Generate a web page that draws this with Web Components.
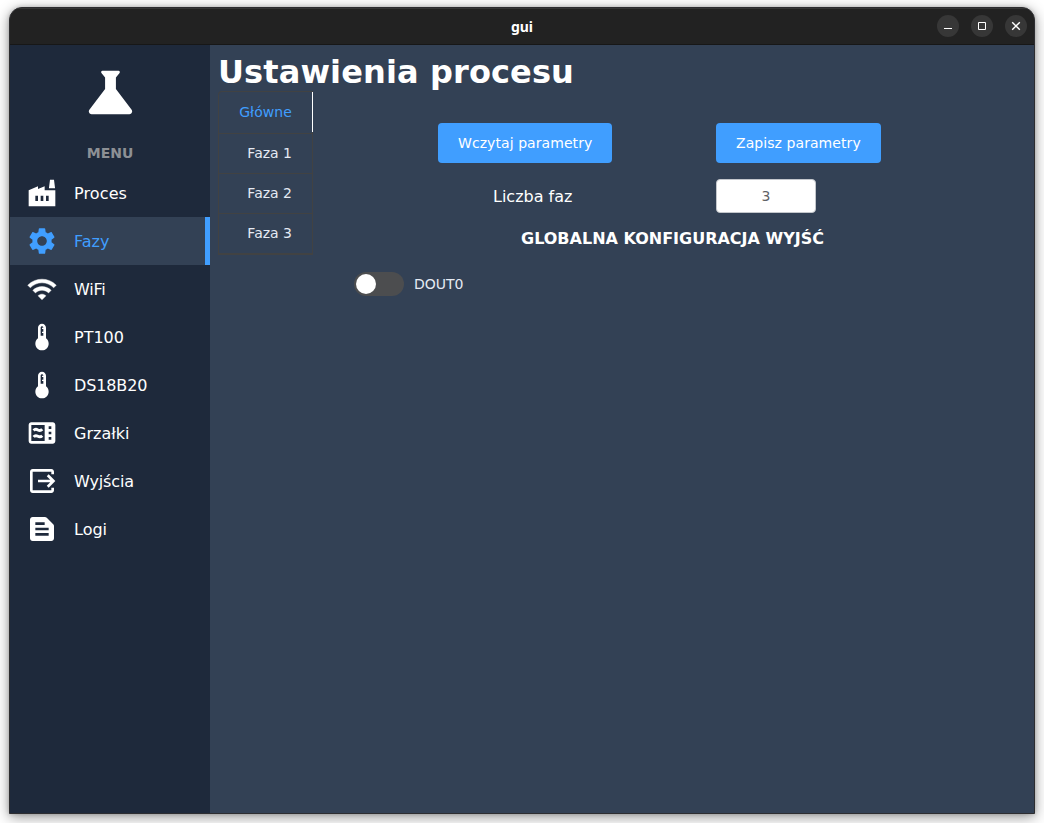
<!DOCTYPE html>
<html lang="pl">
<head>
<meta charset="utf-8">
<title>gui</title>
<style>
html,body{margin:0;height:100%;overflow:hidden;background:#fff}
body{font-family:"DejaVu Sans",sans-serif;color:#fff}
</style>
</head>
<body>
<app-window caption="gui">
  <side-menu slot="side">
    <menu-item icon="factory" style="letter-spacing:.12px">Proces</menu-item>
    <menu-item icon="settings" active>Fazy</menu-item>
    <menu-item icon="wifi" style="letter-spacing:-.2px">WiFi</menu-item>
    <menu-item icon="thermo">PT100</menu-item>
    <menu-item icon="thermo" style="letter-spacing:-.12px">DS18B20</menu-item>
    <menu-item icon="heater">Grzałki</menu-item>
    <menu-item icon="output" style="letter-spacing:-.12px">Wyjścia</menu-item>
    <menu-item icon="log">Logi</menu-item>
  </side-menu>
  <process-settings></process-settings>
</app-window>
<script>
const ICONS = {
  flask:'<path d="M19.8 18.4 14 10.67V6.5l1.35-1.69c.26-.33.03-.81-.39-.81H9.04c-.42 0-.65.48-.39.81L10 6.5v4.17L4.2 18.4c-.49.66-.02 1.6.8 1.6h14c.82 0 1.29-.94.8-1.6z"/>',
  factory:'<path fill-rule="evenodd" d="M22 10v12H2V10l7-3v2l5-2v3h8zM17.2 8.5 18 2h3l.8 6.5h-4.6zM11 18h2v-4h-2v4zM7 18h2v-4H7v4zM17 14h-2v4h2v-4z"/>',
  settings:'<path d="M19.14 12.94c.04-.3.06-.61.06-.94 0-.32-.02-.64-.07-.94l2.03-1.58c.18-.14.23-.41.12-.61l-1.92-3.32c-.12-.22-.37-.29-.59-.22l-2.39.96c-.5-.38-1.03-.7-1.62-.94l-.36-2.54c-.04-.24-.24-.41-.48-.41h-3.84c-.24 0-.43.17-.47.41l-.36 2.54c-.59.24-1.13.57-1.62.94l-2.39-.96c-.22-.08-.47 0-.59.22L2.74 8.87c-.12.21-.08.47.12.61l2.03 1.58c-.05.3-.09.63-.09.94s.02.64.07.94l-2.03 1.58c-.18.14-.23.41-.12.61l1.92 3.32c.12.22.37.29.59.22l2.39-.96c.5.38 1.03.7 1.62.94l.36 2.54c.05.24.24.41.48.41h3.84c.24 0 .44-.17.47-.41l.36-2.54c.59-.24 1.13-.56 1.62-.94l2.39.96c.22.08.47 0 .59-.22l1.92-3.32c.12-.22.07-.47-.12-.61l-2.01-1.58zM12 15.6c-1.98 0-3.6-1.62-3.6-3.6s1.62-3.6 3.6-3.6 3.6 1.62 3.6 3.6-1.62 3.6-3.6 3.6z"/>',
  wifi:'<path d="M1.300 9.100l1.900 2c4.970-4.970 12.630-4.970 17.600 0l1.900-2C16.730 3.130 7.280 3.130 1.300 9.100zm7.700 8 3 3 3-3c-1.650-1.660-4.340-1.660-6 0zm-3.900-4.100 2 2c2.700-2.700 7.100-2.700 9.800 0l2-2C15.140 9.240 8.870 9.240 5.100 13z" stroke="currentColor" stroke-width=".3" stroke-linejoin="round"/>',
  thermo:'<path d="M15 13V5c0-1.66-1.34-3-3-3S9 3.34 9 5v8c-1.21.91-2 2.37-2 4 0 2.76 2.24 5 5 5s5-2.24 5-5c0-1.63-.79-3.09-2-4zm-4-8c0-.55.45-1 1-1s1 .45 1 1h-1v1h1v2h-1v1h1v2h-2V5z"/>',
  heater:'<path fill-rule="evenodd" d="M20 4H4c-1.1 0-2 .9-2 2v12c0 1.1.9 2 2 2h16c1.1 0 2-.9 2-2V6c0-1.1-.9-2-2-2zM14 18H4V6h10v12zM19 17h-2v-2h2v2zm0-4h-2v-2h2v2zm0-4h-2V7h2v2z"/><path fill="none" stroke="currentColor" stroke-width="2.2" d="M5.700 10.100c1-1.100 2.100-1 3.200-.4s2.200.6 3.300-.5M5.700 14.900c1-1.100 2.100-1 3.200-.4s2.200.6 3.300-.5"/>',
  output:'<path d="m17 17 5-5-5-5-1.410 1.410L18.170 11H9v2h9.170l-2.580 2.590zM19 19H5V5h14v2h2V5c0-1.100-.9-2-2-2H5c-1.100 0-2 .9-2 2v14c0 1.100.9 2 2 2h14c1.100 0 2-.9 2-2v-2h-2v2z"/>',
  log:'<path d="m20.410 8.410-4.830-4.830c-.37-.37-.88-.58-1.410-.58H5c-1.100 0-2 .9-2 2v14c0 1.100.9 2 2 2h14c1.100 0 2-.9 2-2V9.830c0-.53-.21-1.040-.59-1.420zM7 7h7v2H7V7zm10 10H7v-2h10v2zm0-4H7v-2h10v2z"/>'
};
const define = (name, render) => customElements.define(name, class extends HTMLElement {
  connectedCallback(){
    if (!this.shadowRoot) this.attachShadow({mode:'open'}).innerHTML = render(this);
  }
});

define('app-icon', el => `<style>
:host{display:block;width:32px;height:32px;flex:none}
svg{display:block;width:100%;height:100%;fill:currentColor}
</style><svg viewBox="0 0 24 24">${ICONS[el.getAttribute('name')]}</svg>`);

define('window-button', el => `<style>
:host{display:block;width:22px;height:22px;border-radius:50%;background:#373737}
svg{display:block;fill:none;stroke:#fff}
</style><svg width="22" height="22">${{
  min:'<path d="M7 13.500h8"/>',
  max:'<path d="M7.500 7.500h7v7h-7z"/>',
  close:'<path stroke-width="1.400" d="M7.200 7.200l7.600 7.600M14.800 7.200l-7.600 7.600"/>'
}[el.getAttribute('kind')]}</svg>`);

define('app-window', el => `<style>
:host{display:block;padding:7px 9px 9px;height:100vh;box-sizing:border-box}
.frame{height:807px;box-sizing:border-box;border:1px solid #2d2d30;border-radius:13px 13px 0 0;overflow:hidden;
 display:flex;flex-direction:column;background:#222;box-shadow:0 3px 14px rgba(0,0,0,.42),0 0 4px rgba(0,0,0,.18)}
header{height:37px;box-sizing:border-box;border-top:1px solid #363636;border-bottom:1px solid #171717;
 display:grid;grid-template-columns:1fr auto 1fr;align-items:center;font:bold 14px "Noto Sans",sans-serif}
.title{line-height:20px}
.buttons{display:flex;gap:12px;justify-content:flex-end;padding:0 7px 2px 0}
.body{flex:1;display:flex;min-height:0;background:#334155}
.main{flex:1;min-width:0}
</style><div class="frame"><header><span></span><span class="title">${el.getAttribute('caption')}</span>
<div class="buttons"><window-button kind="min"></window-button><window-button kind="max"></window-button><window-button kind="close"></window-button></div></header>
<div class="body"><slot name="side"></slot><div class="main"><slot></slot></div></div></div>`);

define('side-menu', () => `<style>
:host{display:block;width:200px;flex:none;background:#1e293b}
app-icon{width:65px;height:65px;margin:15px auto 0}
.label{margin-top:19px;height:18px;line-height:18px;margin-bottom:7px;text-align:center;font-size:14px;font-weight:bold;color:#8d9095}
</style><app-icon name="flask"></app-icon><div class="label">MENU</div><nav><slot></slot></nav>`);

define('menu-item', el => `<style>
:host{display:flex;align-items:center;gap:16px;height:48px;padding-left:16px;box-sizing:border-box;font-size:16px;color:#fff}
:host([active]){background:#334155;color:#409eff;border-right:5px solid #409eff}
</style><app-icon name="${el.getAttribute('icon')}"></app-icon><span><slot></slot></span>`);

define('phase-tabs', () => `<style>
:host{display:block;width:95px;box-sizing:border-box;border:1px solid #414243;border-bottom-width:2px;border-radius:4px 0 0 0}
::slotted(phase-tab:not(:first-child)){border-top:1px solid #414243}
</style><slot></slot>`);

define('phase-tab', () => `<style>
:host{display:block;height:40px;line-height:39px;box-sizing:border-box;padding-right:20px;text-align:right;font-size:14px;color:#e5eaf3}
:host([active]){color:#409eff;line-height:40px;letter-spacing:.08px;margin-right:-1px;margin-bottom:1px;border-right:1px solid #fff}
</style><slot></slot>`);

define('primary-button', () => `<style>
:host{display:block}
button{display:block;height:40px;padding:0 20px;border:0;border-radius:4px;background:#409eff;color:#fff;font:14px "DejaVu Sans",sans-serif;letter-spacing:.07px;white-space:nowrap}
</style><button><slot></slot></button>`);

define('number-box', () => `<style>
:host{display:block;width:100px;height:34px;box-sizing:border-box;border:1px solid #c4c7cc;border-radius:4px;background:#fff;color:#606266;
 font-size:14px;line-height:32px;text-align:center}
</style><slot></slot>`);

define('toggle-switch', () => `<style>
:host{display:flex;align-items:center;gap:10px;font-size:14px;color:#e5eaf3}
.track{width:50px;height:24px;box-sizing:border-box;padding:2px;border-radius:12px;background:#4c4d4f}
.knob{width:20px;height:20px;border-radius:50%;background:#fff}
</style><div class="track"><div class="knob"></div></div><span><slot></slot></span>`);

define('process-settings', () => `<style>
:host{display:block;padding:8px}
h1{margin:0;font-size:32px;line-height:38px;height:38px;letter-spacing:.12px}
.row{display:flex;align-items:flex-start}
.form{flex:1;padding:32px 0 0 5px;display:grid;grid-template-columns:398px 1fr;grid-template-rows:40px 34px 20px 38px;row-gap:16px;align-items:center}
.load{padding-left:120px}
.count{padding-left:175px;font-size:16px}
h2{grid-column:1/-1;margin:0 0 0 203px;font-size:16px;line-height:20px}
toggle-switch{grid-column:1/-1;padding:0 0 0 36px}
</style><h1>Ustawienia procesu</h1>
<div class="row"><phase-tabs><phase-tab active>Główne</phase-tab><phase-tab>Faza 1</phase-tab><phase-tab>Faza 2</phase-tab><phase-tab>Faza 3</phase-tab></phase-tabs>
<div class="form">
<primary-button class="load">Wczytaj parametry</primary-button><primary-button>Zapisz parametry</primary-button>
<span class="count">Liczba faz</span><number-box>3</number-box>
<h2>GLOBALNA KONFIGURACJA WYJŚĆ</h2>
<toggle-switch>DOUT0</toggle-switch>
</div></div>`);
</script>
</body>
</html>
